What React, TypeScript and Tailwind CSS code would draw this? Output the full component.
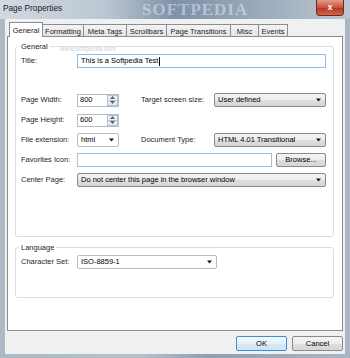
function Arrow() {
  return (
    <svg width="5" height="4" viewBox="0 0 5 4" className="shrink-0">
      <path d="M0 0.5h5L2.5 3.5z" fill="#111" />
    </svg>
  );
}

function Combo({ value, w, flat }: { value: string; w: string; flat?: boolean }) {
  return (
    <div
      className={
        "h-[14px] flex items-center justify-between pl-[3px] pr-[4px] rounded-[2px] border " +
        w +
        (flat
          ? " bg-white border-[#b5bcc6]"
          : " border-[#8a8a8a] bg-[linear-gradient(#f4f4f4_0%,#ececec_50%,#dedede_51%,#d6d6d6_100%)]")
      }
    >
      <span className="text-black">{value}</span>
      <Arrow />
    </div>
  );
}

function Spin({ value }: { value: string }) {
  return (
    <div className="w-[42px] h-[13px] flex items-center border border-[#b5bcc6] bg-white">
      <span className="flex-1 pl-[2px] text-black">{value}</span>
      <div className="w-[11px] h-full flex flex-col">
        <div className="flex-1 flex items-center justify-center border border-[#b9c3cf] bg-[#eef2f6]">
          <svg width="5" height="3" viewBox="0 0 5 3">
            <path d="M0 3h5L2.5 0z" fill="#4e5f78" />
          </svg>
        </div>
        <div className="flex-1 flex items-center justify-center border border-t-0 border-[#b9c3cf] bg-[#e6ebf1]">
          <svg width="5" height="3" viewBox="0 0 5 3">
            <path d="M0 0h5L2.5 3z" fill="#4e5f78" />
          </svg>
        </div>
      </div>
    </div>
  );
}

function Label({ text, w }: { text: string; w: string }) {
  return <span className={"shrink-0 text-[#1e1e1e] " + w}>{text}</span>;
}

const tabs = [
  { name: "General", w: "w-[34px]" },
  { name: "Formatting", w: "w-[42px]" },
  { name: "Meta Tags", w: "w-[44px]" },
  { name: "Scrollbars", w: "w-[41px]" },
  { name: "Page Transitions", w: "w-[65px]" },
  { name: "Misc", w: "w-[29px]" },
  { name: "Events", w: "w-[30px]" },
];

export default function App() {
  return (
    <div className="w-[350px] h-[358px] flex flex-col overflow-hidden bg-[linear-gradient(90deg,#aeb9c6,#b6c1cd_40%,#8d9fb4_60%,#aab6c4)] font-['Liberation_Sans',Arial,sans-serif] text-[7.5px] leading-none">
      {/* title bar */}
      <div className="relative h-[19px] shrink-0 flex items-center pl-[3px] bg-[linear-gradient(90deg,#d2d9e1_0%,#bcc7d3_30%,#7e91a9_50%,#98a8bb_72%,#bcc6d1_100%)]">
        <span className="text-[8.25px] text-[#1b1b1b]">Page Properties</span>
        <span className="absolute left-[142px] top-[1px] font-['Liberation_Serif',serif] font-bold text-[17px] tracking-[1px] text-white/40 blur-[0.6px]">
          SOFTPEDIA
        </span>
        <div className="flex-1" />
        <div className="mr-[6px] self-start w-[28px] h-[16px] flex items-center justify-center rounded-b-[4px] border border-t-0 border-[#6d2a20] bg-[linear-gradient(#e39b8c,#c9503b_50%,#b8321c_51%,#d0654c)]">
          <span className="text-white font-bold text-[9px]">x</span>
        </div>
      </div>

      {/* client area */}
      <div className="mx-[5px] h-[335px] bg-[#f0f0f0] px-[2px] pt-[3px] flex flex-col">
        {/* tabs */}
        <div className="h-[14px] flex items-end pl-[2px]">
          {tabs.map((t, i) =>
            i === 0 ? (
              <div
                key={t.name}
                className={
                  "relative z-10 h-[15px] -mb-[1px] flex justify-center pt-[4px] border border-b-0 border-[#898c95] bg-white text-[#1e1e1e] " +
                  t.w
                }
              >
                {t.name}
              </div>
            ) : (
              <div
                key={t.name}
                className={
                  "-ml-[1px] h-[12px] flex justify-center pt-[3px] border border-b-0 border-[#898c95] bg-[linear-gradient(#f4f4f4,#e4e4e4)] text-[#1e1e1e] " +
                  t.w
                }
              >
                {t.name}
              </div>
            )
          )}
        </div>

        {/* panel */}
        <div className="relative h-[295px] border border-[#898c95] bg-white pl-[7px] pt-[9px]">
          <span className="absolute left-[52px] top-[9px] text-[6.5px] text-[#d2d2d2]">www.softpedia.com</span>

          {/* General group */}
          <div className="relative w-[319px] h-[191px] rounded-[3px] border border-[#d5dfe5] pl-[5px] pt-[7px]">
            <span className="absolute left-[3px] -top-[4px] bg-white px-[2px] text-[#1e1e1e]">General</span>

            <div className="h-[14px] flex items-center">
              <Label text="Title:" w="w-[56px]" />
              <div className="w-[249px] h-[14px] flex items-center pl-[3px] border border-[#8fbde6] bg-white text-black">
                This is a Softpedia Test
                <span className="ml-[1px] w-px h-[9px] bg-black" />
              </div>
            </div>

            <div className="mt-[25px] flex flex-col gap-[6px]">
              <div className="h-[14px] flex items-center">
                <Label text="Page Width:" w="w-[56px]" />
                <Spin value="800" />
                <span className="ml-[22px]" />
                <Label text="Target screen size:" w="w-[73px]" />
                <Combo value="User defined" w="w-[112px]" />
              </div>
              <div className="h-[14px] flex items-center">
                <Label text="Page Height:" w="w-[56px]" />
                <Spin value="600" />
              </div>
              <div className="h-[14px] flex items-center">
                <Label text="File extension:" w="w-[56px]" />
                <Combo value="html" w="w-[42px]" flat />
                <span className="ml-[22px]" />
                <Label text="Document Type:" w="w-[73px]" />
                <Combo value="HTML 4.01 Transitional" w="w-[112px]" />
              </div>
              <div className="h-[14px] flex items-center">
                <Label text="Favorites Icon:" w="w-[56px]" />
                <div className="w-[195px] h-[14px] border border-[#9cc3e5] bg-white" />
                <div className="ml-[4px] w-[50px] h-[14px] flex items-center justify-center rounded-[2px] border border-[#8a8a8a] bg-[linear-gradient(#f4f4f4_0%,#ececec_50%,#dedede_51%,#d6d6d6_100%)] text-black">
                  Browse...
                </div>
              </div>
              <div className="h-[14px] flex items-center">
                <Label text="Center Page:" w="w-[56px]" />
                <Combo value="Do not center this page in the browser window" w="w-[249px]" />
              </div>
            </div>
          </div>

          {/* Language group */}
          <div className="relative mt-[10px] w-[319px] h-[51px] rounded-[3px] border border-[#d5dfe5] pl-[5px] pt-[7px]">
            <span className="absolute left-[3px] -top-[4px] bg-white px-[2px] text-[#1e1e1e]">Language</span>
            <div className="h-[14px] flex items-center">
              <Label text="Character Set:" w="w-[56px]" />
              <Combo value="ISO-8859-1" w="w-[140px]" flat />
            </div>
          </div>
        </div>

        {/* buttons */}
        <div className="mt-[5px] flex justify-end gap-[5px]">
          <div className="w-[51px] h-[15px] flex items-center justify-center rounded-[2px] border border-[#3c8fd1] bg-[linear-gradient(#f2f8fc_0%,#e6f1f9_50%,#d5e8f5_51%,#cfe4f3_100%)] text-black">
            OK
          </div>
          <div className="w-[51px] h-[15px] flex items-center justify-center rounded-[2px] border border-[#8a8a8a] bg-[linear-gradient(#f4f4f4_0%,#ececec_50%,#dedede_51%,#d6d6d6_100%)] text-black">
            Cancel
          </div>
        </div>
      </div>
    </div>
  );
}
